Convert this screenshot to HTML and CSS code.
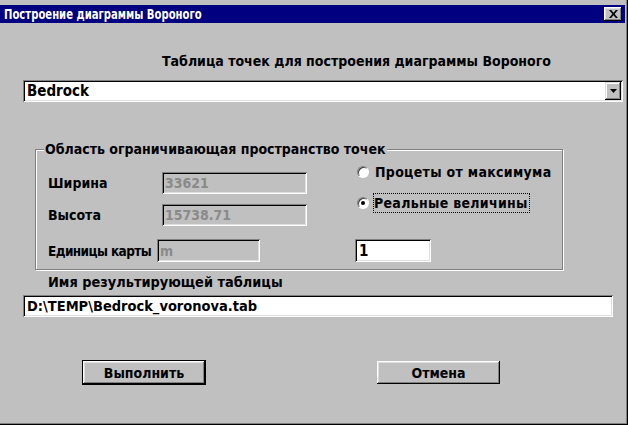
FILE: index.html
```html
<!DOCTYPE html>
<html lang="ru">
<head>
<meta charset="utf-8">
<title>Построение диаграммы Вороного</title>
<link rel="stylesheet" href="styles.css">
</head>
<body>
<div class="window">
  <div class="titlebar">
    <span class="title">Построение диаграммы Вороного</span>
    <span class="close-btn">
      <svg width="9" height="8" viewBox="0 0 9 8"><path d="M0 0h2.2l2.3 2.8L6.8 0H9L5.6 4 9 8H6.8L4.5 5.2 2.2 8H0l3.4-4z" fill="#000"/></svg>
    </span>
  </div>
  <div class="content">
    <div class="caption">Таблица точек для построения диаграммы Вороного</div>
    <div class="combo sunken">
      <span class="field-text">Bedrock</span>
      <span class="drop-btn">
        <svg width="7" height="4" viewBox="0 0 7 4"><path d="M0 0h7L3.5 4z" fill="#000"/></svg>
      </span>
    </div>
    <fieldset class="group">
      <legend class="legend">Область ограничивающая пространство точек</legend>
      <div class="group-inner">
        <div class="left-col">
          <div class="row">
            <span class="lbl lbl-fixed">Ширина</span>
            <span class="field sunken disabled wide">33621</span>
          </div>
          <div class="row">
            <span class="lbl lbl-fixed">Высота</span>
            <span class="field sunken disabled wide">15738.71</span>
          </div>
          <div class="row row-units">
            <span class="lbl lbl-units">Единицы карты</span>
            <span class="field sunken disabled units">m</span>
          </div>
        </div>
        <div class="right-col">
          <div class="radio radio-first">
            <span class="radio-circle"></span>
            <span class="radio-text">Процеты от максимума</span>
          </div>
          <div class="radio radio-second">
            <span class="radio-circle checked"></span>
            <span class="radio-text focus">Реальные величины</span>
          </div>
          <span class="field sunken small">1</span>
        </div>
      </div>
    </fieldset>
    <div class="out-label">Имя результирующей таблицы</div>
    <div class="field sunken output">D:\TEMP\Bedrock_voronova.tab</div>
    <div class="buttons">
      <span class="btn default"><span class="btn-face">Выполнить</span></span>
      <span class="btn cancel"><span class="btn-face">Отмена</span></span>
    </div>
  </div>
</div>
</body>
</html>
```

FILE: styles.css
```css
html, body {
  margin: 0;
  padding: 0;
  background: #c0c0c0;
}

body {
  font-family: "Liberation Sans Narrow", "DejaVu Sans Condensed", "Liberation Sans", sans-serif;
  font-weight: bold;
  font-size: 14px;
  color: #000;
}

.window {
  width: 628px;
  height: 425px;
  box-sizing: border-box;
  padding-top: 5px;
  background: #c0c0c0;
  box-shadow: inset -1px -1px #000, inset -2px -2px #808080;
  overflow: hidden;
}

.titlebar {
  height: 18px;
  margin-right: 3px;
  background: #000080;
  display: flex;
  align-items: center;
  justify-content: space-between;
  padding: 0 3px 0 4px;
}

.title {
  color: #fff;
  font-size: 14px;
  line-height: 16px;
  white-space: nowrap;
  transform: scaleX(0.8);
  transform-origin: left center;
}

.close-btn {
  width: 18px;
  height: 14px;
  box-sizing: border-box;
  background: #c0c0c0;
  box-shadow: inset -1px -1px #000, inset 1px 1px #fff, inset -2px -2px #808080, inset 2px 2px #dfdfdf;
  display: flex;
  align-items: center;
  justify-content: center;
}

.content {
  padding-left: 23px;
  padding-right: 5px;
}

.caption {
  margin-top: 30px;
  padding-left: 139px;
  line-height: 16px;
}

.sunken {
  box-sizing: border-box;
  box-shadow: inset 1px 1px #808080, inset -1px -1px #fff, inset 2px 2px #000, inset -2px -2px #dfdfdf;
}

.combo {
  margin-top: 11px;
  height: 22px;
  background: #fff;
  display: flex;
  align-items: center;
  justify-content: space-between;
  padding: 2px 2px 2px 4px;
}

.field-text {
  line-height: 16px;
  font-size: 15px;
}

.drop-btn {
  width: 16px;
  height: 18px;
  box-sizing: border-box;
  background: #c0c0c0;
  box-shadow: inset -1px -1px #000, inset 1px 1px #dfdfdf, inset -2px -2px #808080, inset 2px 2px #fff;
  display: flex;
  align-items: center;
  justify-content: center;
}

.group {
  margin: 39px 0 0 12px;
  padding: 0 0 7px 12px;
  width: 528px;
  box-sizing: border-box;
  border: 1px solid #808080;
  box-shadow: 1px 1px #fff, inset 1px 1px #fff;
  min-width: 0;
}

.legend {
  margin-left: -4px;
  padding: 0 1px;
  line-height: 16px;
  background: #c0c0c0;
}

.group-inner {
  display: flex;
  align-items: flex-start;
}

.left-col {
  width: 259px;
  flex: none;
  padding-top: 15px;
  display: flex;
  flex-direction: column;
  gap: 10px;
}

.row {
  display: flex;
  align-items: center;
  height: 22px;
}

.row-units {
  margin-top: 3px;
  height: 23px;
}

.lbl {
  flex: none;
  line-height: 16px;
  white-space: nowrap;
}

.lbl-fixed {
  width: 114px;
}

.lbl-units {
  width: 109px;
  font-size: 13.5px;
  letter-spacing: -0.6px;
}

.field {
  flex: none;
  display: flex;
  align-items: center;
  padding: 2px 4px;
  line-height: 16px;
  white-space: nowrap;
}

.disabled {
  background: #c0c0c0;
  color: #8a8a8a;
  padding-left: 3px;
}

.wide {
  width: 145px;
  height: 22px;
}

.units {
  width: 103px;
  height: 23px;
}

.right-col {
  margin-left: 48px;
  padding-top: 7px;
  display: flex;
  flex-direction: column;
}

.radio {
  display: flex;
  align-items: center;
  white-space: nowrap;
}

.radio-first {
  height: 16px;
}

.radio-second {
  height: 22px;
  margin-top: 12px;
}

.radio-circle {
  width: 12px;
  height: 12px;
  box-sizing: border-box;
  margin-left: 2px;
  border-radius: 50%;
  background: #fff;
  border: 1px solid;
  border-color: #808080 #fff #fff #808080;
  box-shadow: inset 1px 1px #404040;
  display: flex;
  align-items: center;
  justify-content: center;
}

.radio-circle.checked::after {
  content: "";
  width: 4px;
  height: 4px;
  border-radius: 50%;
  background: #000;
}

.radio-text {
  margin-left: 6px;
  line-height: 16px;
  letter-spacing: 0.3px;
}

.radio-text.focus {
  margin-left: 4px;
  padding: 2px 2px 2px 1px;
  outline: 1px dotted #000;
  outline-offset: -1px;
}

.small {
  margin-top: 25px;
  width: 76px;
  height: 23px;
  background: #fff;
  font-size: 15px;
}

.out-label {
  margin-top: 4px;
  padding-left: 25px;
  line-height: 16px;
  font-size: 14.4px;
}

.output {
  margin-top: 5px;
  width: 590px;
  height: 22px;
  background: #fff;
  font-size: 14.5px;
}

.buttons {
  margin-top: 43px;
  padding-left: 59px;
  display: flex;
  align-items: center;
}

.btn {
  box-sizing: border-box;
  display: flex;
}

.btn-face {
  flex: 1;
  display: flex;
  align-items: center;
  justify-content: center;
  background: #c0c0c0;
  box-shadow: inset -1px -1px #000, inset 1px 1px #fff, inset -2px -2px #808080, inset 2px 2px #dfdfdf;
  line-height: 16px;
}

.default {
  width: 124px;
  height: 25px;
  border: 1px solid #000;
}

.cancel {
  width: 123px;
  height: 23px;
  margin-left: 171px;
}
```
